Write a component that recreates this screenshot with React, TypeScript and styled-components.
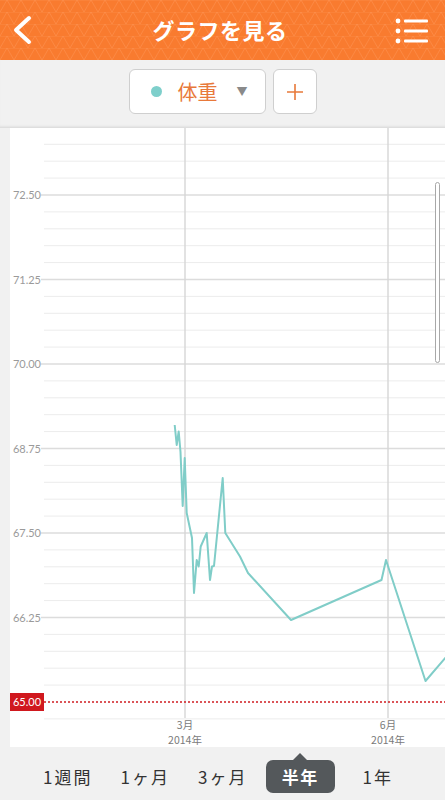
import React from 'react';
import styled, { createGlobalStyle } from 'styled-components';

const GlobalStyle = createGlobalStyle`
	html, body {
		margin: 0;
		padding: 0;
		background: #f1f1f1;
	}
	* {
		box-sizing: border-box;
	}
`;

const FONT = `'Noto Sans CJK JP', 'Noto Sans', sans-serif`;

const pattern = encodeURIComponent(
	`<svg xmlns='http://www.w3.org/2000/svg' width='14' height='12'><path d='M0 12 L7 0 L14 12 M-7 0 L0 12 M14 12 L21 0 M0 0 H14' fill='none' stroke='#ff9a5c' stroke-opacity='0.45' stroke-width='1'/></svg>`
);

// 体重の記録 (x, y はグラフ内の座標)
const points: [number, number][] = [
	[174.7, 425],
	[176.7, 445],
	[178.7, 431.5],
	[180.5, 452],
	[182.7, 506],
	[184.7, 458],
	[186.7, 513],
	[192, 538],
	[194, 593],
	[196.7, 560],
	[198.7, 566.5],
	[200.7, 546.5],
	[206.7, 533],
	[210, 580],
	[212, 566.5],
	[214, 566],
	[222.7, 478],
	[225.3, 533],
	[240, 556.5],
	[248, 573],
	[291, 620],
	[381.5, 580],
	[386, 560],
	[425.5, 681],
	[446, 657],
];

const X0 = 10;
const Y0 = 128;
const BASE = 702;
const STEP = 16.9;

const majors = ['65.00', '66.25', '67.50', '68.75', '70.00', '71.25', '72.50'];

const tabs = ['1週間', '1ヶ月', '3ヶ月', '半年', '1年'];

const App: React.FC = () => {
	const lines = [];
	for (let k = -1; k <= 33; k++) {
		if (k === 0) continue;
		const y = BASE - k * STEP - Y0;
		const major = k % 5 === 0;
		lines.push(
			<line
				key={k}
				x1={major ? 31 : 34}
				x2={435}
				y1={y}
				y2={y}
				stroke={major ? '#dcdcdc' : '#ececec'}
				strokeWidth={major ? 1.3 : 1}
			/>
		);
	}

	const path = points.map(([x, y], i) => `${i === 0 ? 'M' : 'L'}${(x - X0).toFixed(1)} ${(y - Y0).toFixed(1)}`).join(' ');

	return (
		<SPage>
			<GlobalStyle />
			<SHeader>
				<SSide>
					<svg width='22' height='30' viewBox='0 0 22 30'>
						<polyline points='18,3 5,15 18,27' fill='none' stroke='#fff' strokeWidth='4' strokeLinecap='round' strokeLinejoin='round' />
					</svg>
				</SSide>
				<STitle>グラフを見る</STitle>
				<SSide right>
					<svg width='34' height='26' viewBox='0 0 34 26'>
						<circle cx='3' cy='3' r='2.4' fill='#fff' />
						<circle cx='3' cy='13' r='2.4' fill='#fff' />
						<circle cx='3' cy='23' r='2.4' fill='#fff' />
						<rect x='9' y='1.5' width='24' height='3' rx='1' fill='#fff' />
						<rect x='9' y='11.5' width='24' height='3' rx='1' fill='#fff' />
						<rect x='9' y='21.5' width='24' height='3' rx='1' fill='#fff' />
					</svg>
				</SSide>
			</SHeader>

			<SToolbar>
				<SSelect>
					<SDot />
					<SSelectLabel>体重</SSelectLabel>
					<SCaret>▼</SCaret>
				</SSelect>
				<SAdd>
					<svg width='18' height='18' viewBox='0 0 18 18'>
						<path d='M9 1 V17 M1 9 H17' stroke='#e8793a' strokeWidth='1.6' />
					</svg>
				</SAdd>
			</SToolbar>

			<SChartArea>
				<SChart>
					<svg width='435' height='619' viewBox='0 0 435 619'>
						{lines}
						<line x1={175} x2={175} y1={0} y2={590} stroke='#d6d6d6' strokeWidth='1.4' />
						<line x1={378} x2={378} y1={0} y2={590} stroke='#d6d6d6' strokeWidth='1.4' />
						{majors.map((label, i) => {
							if (i === 0) return null;
							const y = BASE - i * 5 * STEP - Y0;
							return (
								<text key={label} x={31} y={y + 4} textAnchor='end' fontSize='11' fill='#9a9a9a' fontFamily='Lato, sans-serif'>
									{label}
								</text>
							);
						})}
						<path d={path} fill='none' stroke='#80cdc8' strokeWidth='2' strokeLinejoin='round' />
						<line x1={34} x2={435} y1={BASE - Y0} y2={BASE - Y0} stroke='#d01c22' strokeWidth='1.6' strokeDasharray='2 2' />
						<rect x={0} y={BASE - Y0 - 9} width={34} height={18} fill='#d0181e' />
						<text x={17} y={BASE - Y0 + 4} textAnchor='middle' fontSize='11' fill='#fff' fontFamily='Lato, sans-serif'>
							65.00
						</text>
						{[175, 378].map(x => (
							<g key={x} fontFamily={FONT} fontSize='10.5' fill='#7a7a7a' textAnchor='middle'>
								<text x={x} y={601}>
									{x === 175 ? '3月' : '6月'}
								</text>
								<text x={x} y={616}>
									2014年
								</text>
							</g>
						))}
						<rect x={425.5} y={54.5} width={4} height={180} rx={2} fill='#fff' stroke='#a8a8a8' strokeWidth='1' />
					</svg>
				</SChart>
			</SChartArea>

			<SFooter>
				{tabs.map(tab => (
					<STab key={tab} active={tab === '半年'}>
						{tab}
					</STab>
				))}
			</SFooter>
		</SPage>
	);
};

export default App;

const SPage = styled.div`
	width: 445px;
	height: 800px;
	display: flex;
	flex-direction: column;
	background: #f1f1f1;
	overflow: hidden;
	font-family: ${FONT};
`;

const SHeader = styled.div`
	height: 60px;
	flex: none;
	display: flex;
	align-items: center;
	padding: 0 16px 0 11px;
	background-color: #f97b2f;
	background-image: url("data:image/svg+xml,${pattern}");
	background-size: 14px 12px;
`;

const SSide = styled.div<{ right?: boolean }>`
	width: 40px;
	display: flex;
	align-items: center;
	justify-content: ${p => (p.right ? 'flex-end' : 'flex-start')};
	margin-top: ${p => (p.right ? '2px' : '0')};
`;

const STitle = styled.h1`
	flex: 1;
	margin: 0 0 2px 0;
	text-align: center;
	color: #fff;
	font-size: 22px;
	font-weight: 700;
	letter-spacing: 0.5px;
`;

const SToolbar = styled.div`
	height: 68px;
	flex: none;
	display: flex;
	align-items: flex-start;
	justify-content: center;
	gap: 7px;
	padding: 9px 0 0 0;
	background: #f1f1f1;
	box-shadow: inset 0 -3px 3px -2px rgba(0, 0, 0, 0.12);
`;

const SSelect = styled.div`
	width: 137px;
	height: 45px;
	display: flex;
	align-items: center;
	padding: 0 0 0 21px;
	background: #fff;
	border: 1px solid #cfcfcf;
	border-radius: 6px;
`;

const SDot = styled.span`
	width: 11px;
	height: 11px;
	border-radius: 50%;
	background: #7ecfcb;
`;

const SSelectLabel = styled.span`
	margin-left: 16px;
	color: #e8793a;
	font-size: 20px;
	line-height: 1;
`;

const SCaret = styled.span`
	margin-left: 19px;
	color: #8a8a8a;
	font-size: 11px;
	margin-top: -2px;
`;

const SAdd = styled.div`
	width: 44px;
	height: 45px;
	display: flex;
	align-items: center;
	justify-content: center;
	background: #fff;
	border: 1px solid #cfcfcf;
	border-radius: 6px;
`;

const SChartArea = styled.div`
	flex: 1;
	display: flex;
	padding-left: 10px;
	background: #f1f1f1;
`;

const SChart = styled.div`
	width: 435px;
	height: 619px;
	background: #fff;

	svg {
		display: block;
	}
`;

const SFooter = styled.div`
	flex: 1;
	display: grid;
	grid-template-columns: repeat(5, 77.5px);
	justify-items: center;
	align-items: center;
	padding: 6px 0 0 29px;
	background: #f1f1f1;
`;

const STab = styled.div<{ active?: boolean }>`
	position: relative;
	height: 33px;
	padding: 0 ${p => (p.active ? '16px' : '0')};
	display: flex;
	align-items: center;
	border-radius: 7px;
	background: ${p => (p.active ? '#54585b' : 'transparent')};
	color: ${p => (p.active ? '#fff' : '#333')};
	font-size: 17px;
	font-weight: ${p => (p.active ? 700 : 400)};
	letter-spacing: ${p => (p.active ? '1.5px' : '2px')};

	&::before {
		content: '';
		display: ${p => (p.active ? 'block' : 'none')};
		position: absolute;
		left: 50%;
		top: -7px;
		margin-left: -8px;
		border-left: 8px solid transparent;
		border-right: 8px solid transparent;
		border-bottom: 8px solid #54585b;
	}
`;
